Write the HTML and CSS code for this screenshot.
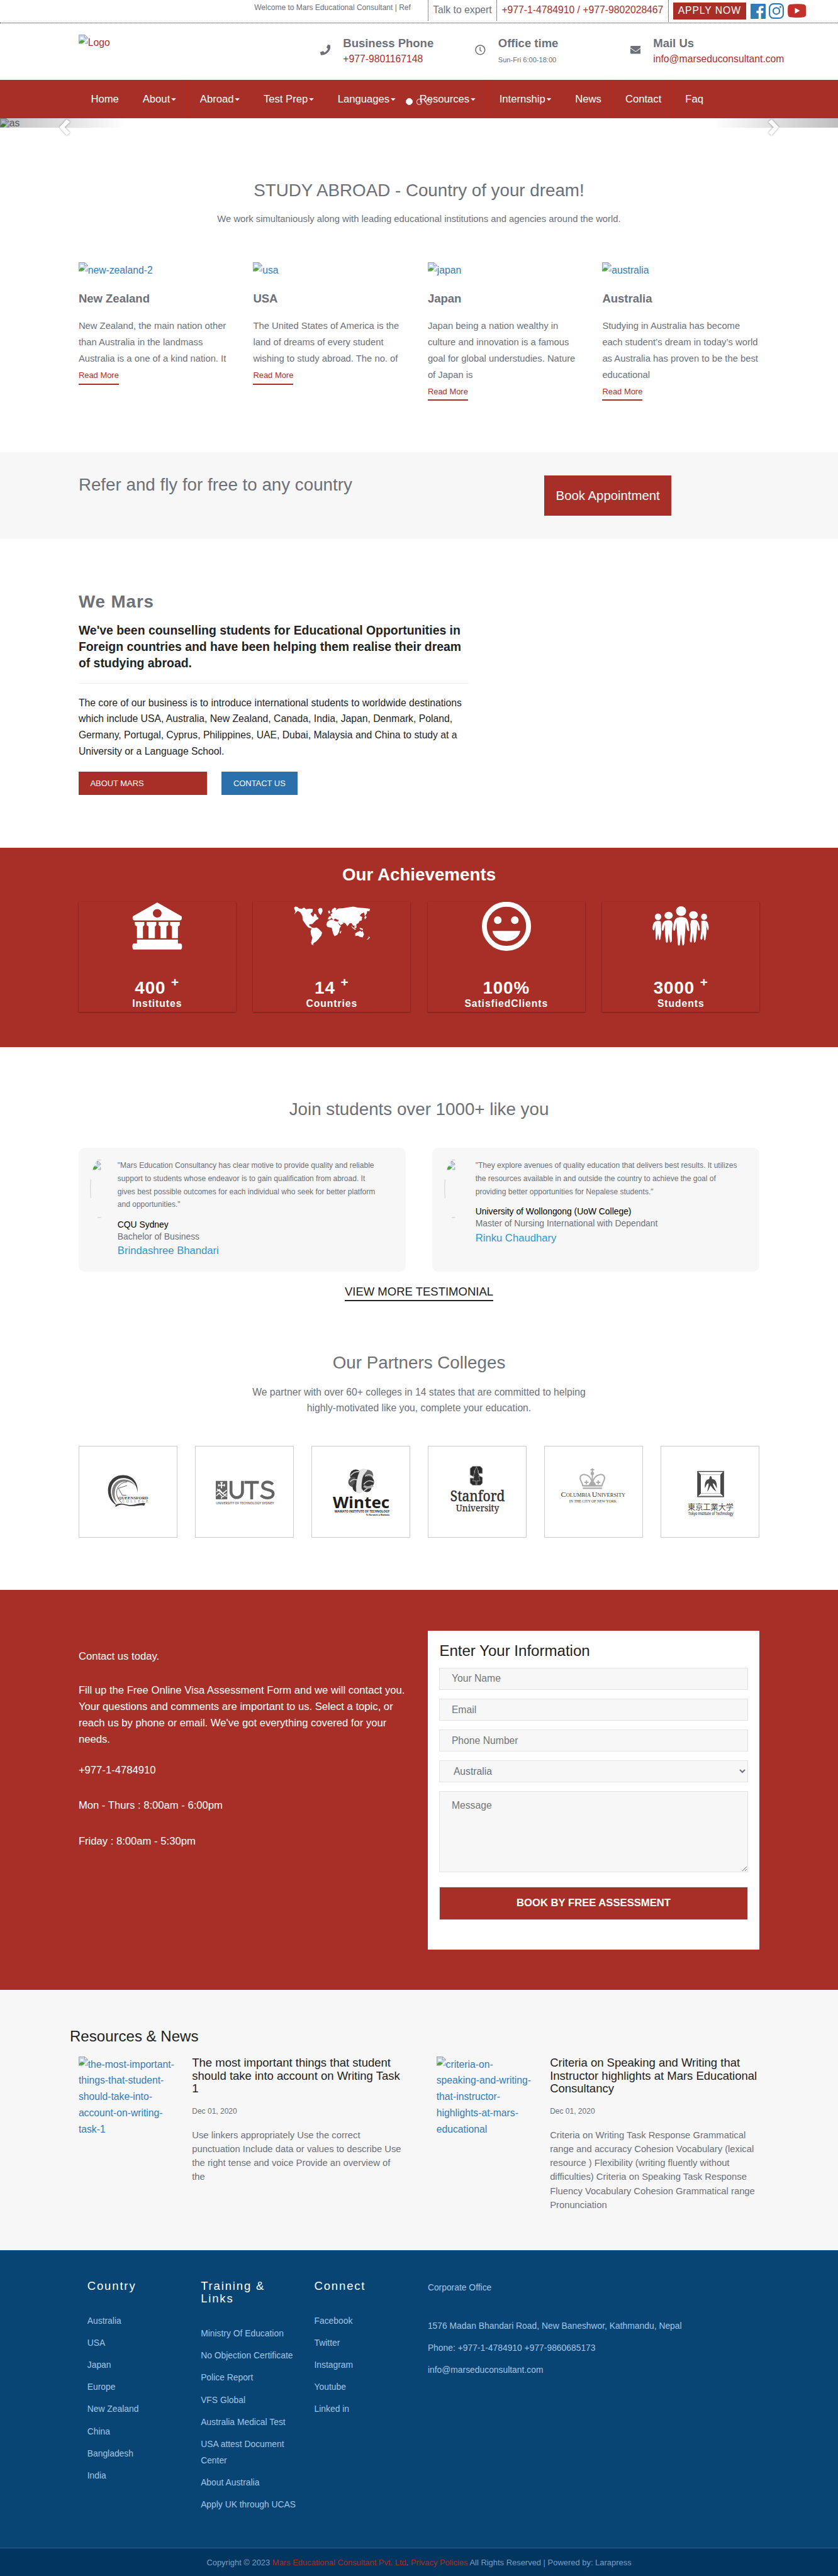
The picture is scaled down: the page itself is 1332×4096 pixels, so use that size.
FILE: index.html
```html
<!DOCTYPE html>
<html lang="en">
<head>
<meta charset="utf-8">
<title>Mars Educational Consultant</title>
<link rel="stylesheet" href="styles.css">
</head>
<body>
<svg class="defs" width="0" height="0" aria-hidden="true">
  <symbol id="missing" viewBox="0 0 16 16">
    <path d="M.5 .5H10.500L15.500 5.500V15.500H.5Z" fill="#c5d5f6"/>
    <path d="M3 6a2 2 0 0 1 3.500-1 1.500 1.500 0 0 1 1.500 2.500H3Z" fill="#fff"/>
    <path d="M1 15V13C3 9.500 6 8.500 9 10.500L12 12V15Z" fill="#4ea635"/>
    <path d="M16 6.500V10L10 16H6Z" fill="#f7f9fd"/>
    <path d="M15.500 10V15.500H11" fill="#c5d5f6"/>
    <path d="M.5 16V.5H10.500L15.500 5.500V7M15.500 11V15.500H11.500M.5 15.500H6" fill="none" stroke="#999" stroke-width="1"/>
    <path d="M10.500 .5V5.500H15.500Z" fill="#fff" stroke="#999" stroke-width="1"/>
  </symbol>
  <symbol id="avatar" viewBox="0 0 34 102">
    <clipPath id="avatar-clip"><ellipse cx="16.500" cy="51" rx="15.500" ry="50"/></clipPath>
    <g clip-path="url(#avatar-clip)"><use href="#missing" x="3" y="3" width="16" height="16"/></g>
    <path d="M13 1.500H19M13 100.500H19" stroke="#c4c4c4" stroke-width="1"/>
    <path d="M1.500 35C.6 46 .6 56 1.500 67" fill="none" stroke="#c0c0c0" stroke-width=".8"/>
  </symbol>
</svg>
<div class="page">
  <div class="topbar">
    <div class="marquee">Welcome to Mars Educational Consultant | Ref</div>
    <div class="cell expert">Talk to expert</div>
    <div class="cell"><a class="red" href="#">+977-1-4784910 / +977-9802028467</a></div>
    <div class="cell actions">
      <a class="apply" href="#">APPLY NOW</a>
      <svg class="fb" width="26" height="26" viewBox="0 0 26 26"><rect width="26" height="26" rx="1.500" fill="#337ab7"/><path d="M18 26V16h3.600l.5-4H18V9.500c0-1.300.5-2 2-2h2.300V4a30 30 0 0 0-3.300-.2c-3.300 0-5.200 2-5.200 5.200v3h-3.600v4h3.600v10Z" fill="#fff"/></svg>
      <svg class="ig" width="26" height="27" viewBox="0 0 26 27"><rect x="1.200" y="1.200" width="23.600" height="24.600" rx="7" fill="none" stroke="#337ab7" stroke-width="2.400"/><circle cx="13" cy="13.500" r="5.500" fill="none" stroke="#337ab7" stroke-width="2.400"/><circle cx="20" cy="6.800" r="1.600" fill="#337ab7"/></svg>
      <svg class="yt" width="32" height="24" viewBox="0 0 32 24"><path d="M4 1Q16-.6 28 1Q31 1.500 31.500 5Q32.400 12 31.500 19Q31 22.500 28 23Q16 24.600 4 23Q1 22.500.5 19Q-.4 12 .5 5Q1 1.500 4 1Z" fill="#c4302b"/><path d="M12.500 7V17L21 12Z" fill="#fff"/></svg>
    </div>
  </div>

  <header class="header">
    <a class="logo red" href="#"><svg class="missing"><use href="#missing"/></svg>Logo</a>
    <div class="info">
      <svg width="18" height="18" viewBox="0 0 512 512"><path fill="#6b7079" d="M493.400 24.600l-104-24c-11.300-2.600-22.900 3.300-27.500 13.900l-48 112c-4.200 9.800-1.400 21.300 6.900 28l60.600 49.600c-36 76.700-98.900 140.500-177.200 177.200l-49.600-60.600c-6.800-8.300-18.200-11.100-28-6.900l-112 48C3.900 366.500-2 378.100.6 389.400l24 104C27.100 504.200 36.700 512 48 512c256.100 0 464-207.500 464-464 0-11.200-7.700-20.900-18.600-23.400z"/></svg>
      <div><h3>Business Phone</h3><p class="red">+977-9801167148</p></div>
    </div>
    <div class="info">
      <svg width="18" height="18" viewBox="0 0 18 18" fill="none" stroke="#6b7079"><circle cx="9" cy="9" r="8" stroke-width="1.700"/><path d="M8.800 4V9.500L11.500 11.600" stroke-width="1.600"/></svg>
      <div><h3>Office time</h3><p><small>Sun-Fri 6:00-18:00</small></p></div>
    </div>
    <div class="info">
      <svg width="18" height="18" viewBox="0 0 18 18"><rect y="2.200" width="18" height="13.600" rx="1.700" fill="#6b7079"/><path d="M0 5.500L7.300 10.900Q9 12 10.700 10.900L18 5.500" fill="none" stroke="#fff" stroke-width="1.100"/></svg>
      <div><h3>Mail Us</h3><p class="red">info@marseduconsultant.com</p></div>
    </div>
  </header>

  <nav class="nav">
    <a href="#">Home</a>
    <a href="#">About<i class="caret"></i></a>
    <a href="#">Abroad<i class="caret"></i></a>
    <a href="#">Test Prep<i class="caret"></i></a>
    <a href="#">Languages<i class="caret"></i></a>
    <a href="#">Resources<i class="caret"></i></a>
    <a href="#">Internship<i class="caret"></i></a>
    <a href="#">News</a>
    <a href="#">Contact</a>
    <a href="#">Faq</a>
  </nav>

  <div class="carousel">
    <span class="slide"><svg class="missing"><use href="#missing"/></svg>as</span>
    <div class="dots"><i class="on"></i><i></i><i></i></div>
    <div class="shade left"></div>
    <div class="shade right"></div>
    <svg class="chev prev" width="22" height="32" viewBox="0 0 22 32"><path d="M14 2L19.500 6.500L10.500 15.500L19.500 25L14 29.500L1.500 15.500Z" fill="#fff"/></svg>
    <svg class="chev next" width="22" height="32" viewBox="0 0 22 32"><path d="M8 2L2.500 6.500L11.500 15.500L2.500 25L8 29.500L20.500 15.500Z" fill="#fff"/></svg>
  </div>

  <section class="abroad">
    <h2>STUDY ABROAD - Country of your dream!</h2>
    <p class="sub">We work simultaniously along with leading educational institutions and agencies around the world.</p>
    <div class="countries">
      <article><a class="alt" href="#"><svg class="missing"><use href="#missing"/></svg>new-zealand-2</a><h3>New Zealand</h3><p>New Zealand, the main nation other than Australia in the landmass Australia is a one of a kind nation. It</p><a class="more" href="#">Read More</a></article>
      <article><a class="alt" href="#"><svg class="missing"><use href="#missing"/></svg>usa</a><h3>USA</h3><p>The United States of America is the land of dreams of every student wishing to study abroad. The no. of</p><a class="more" href="#">Read More</a></article>
      <article><a class="alt" href="#"><svg class="missing"><use href="#missing"/></svg>japan</a><h3>Japan</h3><p>Japan being a nation wealthy in culture and innovation is a famous goal for global understudies. Nature of Japan is</p><a class="more" href="#">Read More</a></article>
      <article><a class="alt" href="#"><svg class="missing"><use href="#missing"/></svg>australia</a><h3>Australia</h3><p>Studying in Australia has become each student’s dream in today’s world as Australia has proven to be the best educational</p><a class="more" href="#">Read More</a></article>
    </div>
  </section>

  <section class="refer">
    <h2>Refer and fly for free to any country</h2>
    <a class="book" href="#">Book Appointment</a>
  </section>

  <section class="mars">
    <h2>We Mars</h2>
    <p class="lead">We've been counselling students for Educational Opportunities in Foreign countries and have been helping them realise their dream of studying abroad.</p>
    <hr>
    <p>The core of our business is to introduce international students to worldwide destinations which include USA, Australia, New Zealand, Canada, India, Japan, Denmark, Poland, Germany, Portugal, Cyprus, Philippines, UAE, Dubai, Malaysia and China to study at a University or a Language School.</p>
    <div class="buttons"><a class="btn-about" href="#">ABOUT MARS</a><a class="btn-contact" href="#">CONTACT US</a></div>
  </section>

  <section class="achieve">
    <h2>Our Achievements</h2>
    <div class="stats">
      <div class="stat">
        <svg width="270" height="131" fill="#fff"><g transform="translate(-35 -90) scale(.7908 .33333)">
          <path fill-rule="evenodd" d="M215 273L268 345Q270 365 264 366H166Q160 365 162 345ZM215 307A9.500 22 0 1 0 215 351A9.500 22 0 1 0 215 307Z"/>
          <path d="M166 374H187V390L184 397V457H171V397L167 390ZM192 374H213V390L210 397V457H196V397L192 390ZM218 374H239V390L235 397V457H222V397L218 390ZM243 374H264V390L260 397V457H247V397L243 390Z"/>
          <path d="M171 465H260V485H266Q269 487 269 500Q269 516 265 516H165Q161 516 161 500Q161 487 164 485H171Z"/></g></svg>
        <strong>400 <sup>+</sup></strong><span>Institutes</span>
      </div>
      <div class="stat">
        <svg width="270" height="131" fill="#fff"><g transform="translate(-335 -90) scale(.7908 .33333)">
          <path d="M513 300L516 294L520 296L524 304L530 306L535 299L539 308L547 305L554 307L553 322L549 330L551 340L555 348L557 330L561 335L563 348L566 352L566 358L561 364L557 374L553 384L546 386L546 394L549 396L552 403L557 405L562 402L568 412L574 428L572 444L566 462L561 474L556 482L554 488L556 495L551 490L550 480L553 455L550 440L549 420L551 408L544 402L540 392L536 378L532 364L531 342L527 325L521 316L517 326L513 335L516 322Z"/>
          <path d="M565 310L569 301L574 304L575 318L571 338L567 328Z"/>
          <path d="M585 374L590 364L597 362L603 370L608 372L611 388L615 396L612 406L611 424L607 440L601 447L598 434L596 416L595 404L586 400L583 388Z"/>
          <path d="M586 358L589 346L594 343L592 336L597 326L594 322L596 308L601 300L605 303L604 312L610 304L618 303L628 299L642 294L652 300L664 302L678 306L677 318L672 318L671 330L667 344L665 324L659 332L656 342L661 348L660 366L655 370L653 380L649 384L648 396L641 392L638 380L634 380L629 396L624 380L617 374L621 380L614 390L608 374L610 364L602 356L599 364L594 352L591 362Z"/>
          <path d="M587 318L590 314L592 328L588 330ZM614 420L616 420L614 434L612 430ZM637 392L640 400L648 412L645 414L639 402ZM644 396L649 396L648 406L644 404ZM655 404L662 408L663 416L657 412ZM646 432L652 424L657 419L660 426L662 419L665 438L662 453L656 451L652 444L646 446ZM675 448L678 454L674 464L671 464L675 456ZM666 350L668 342L671 348L667 362Z"/></g></svg>
        <strong>14 <sup>+</sup></strong><span>Countries</span>
      </div>
      <div class="stat">
        <svg width="270" height="131" fill="#fff"><circle cx="135.200" cy="42" r="38" fill="none" stroke="#fff" stroke-width="8.500"/><ellipse cx="120.200" cy="31.500" rx="6.500" ry="6.700"/><ellipse cx="149.500" cy="31.500" rx="6.500" ry="6.700"/><path d="M111 50H159C157 60 148 67.500 135 67.500S113 60 111 50Z"/></svg>
        <strong>100%</strong><span>SatisfiedClients</span>
      </div>
      <div class="stat">
        <svg width="270" height="131" fill="#fff"><g transform="translate(-935 -90) scale(.7908 .33333)">
          <ellipse cx="1354" cy="318" rx="11" ry="25"/><ellipse cx="1327" cy="340" rx="9" ry="19"/><ellipse cx="1381" cy="338" rx="9.500" ry="20"/><ellipse cx="1304" cy="347" rx="7" ry="17"/><ellipse cx="1404" cy="347" rx="6.500" ry="16"/>
          <path d="M1346 352Q1354 346 1363 352Q1370 360 1371 400L1372 420Q1369 424 1367 412L1364 375L1363 420L1361 485Q1360 498 1357 494L1354 436L1351 494Q1347 500 1347 485L1345 420L1344 375L1341 415Q1338 424 1337 412Q1337 360 1346 352Z"/>
          <path d="M1319 368Q1327 362 1333 368Q1337 380 1335 400L1334 425L1334 470Q1333 482 1330 478L1327 432L1325 478Q1321 486 1321 470L1319 432L1319 385L1316 415Q1313 424 1312 412Q1312 375 1319 368Z"/>
          <path d="M1376 365Q1382 360 1388 366Q1393 375 1395 412Q1394 424 1391 414L1389 385L1388 432L1386 470Q1385 484 1382 478L1380 430L1377 478Q1373 482 1373 466L1375 420L1374 385Z"/>
          <path d="M1298 371Q1304 366 1310 371L1311 430L1309 462Q1307 472 1306 462L1304 432L1302 464Q1299 472 1299 460L1298 390L1296 414Q1293 422 1292 408Q1292 378 1298 371Z"/>
          <path d="M1398 369Q1404 364 1410 371Q1414 380 1414 408Q1413 422 1411 412L1409 390L1409 430L1407 465Q1405 474 1404 464L1402 432L1400 462Q1397 470 1396 458L1398 420Z"/></g></svg>
        <strong>3000 <sup>+</sup></strong><span>Students</span>
      </div>
    </div>
  </section>

  <section class="voices">
    <h2>Join students over 1000+ like you</h2>
    <div class="quotes">
      <div class="quote">
        <svg width="34" height="102"><use href="#avatar"/></svg>
        <div><p>"Mars Education Consultancy has clear motive to provide quality and reliable<br>support to students whose endeavor is to gain qualification from abroad. It<br>gives best possible outcomes for each individual who seek for better platform<br>and opportunities."</p>
        <h4>CQU Sydney</h4><h5>Bachelor of Business</h5><h3>Brindashree Bhandari</h3></div>
      </div>
      <div class="quote wide">
        <svg width="34" height="102"><use href="#avatar"/></svg>
        <div><p>"They explore avenues of quality education that delivers best results. It utilizes<br>the resources available in and outside the country to achieve the goal of<br>providing better opportunities for Nepalese students."</p>
        <h4>University of Wollongong (UoW College)</h4><h5>Master of Nursing International with Dependant</h5><h3>Rinku Chaudhary</h3></div>
      </div>
    </div>
    <a class="viewmore" href="#">VIEW MORE TESTIMONIAL</a>

    <h2 class="partners-title">Our Partners Colleges</h2>
    <p class="partners-sub">We partner with over 60+ colleges in 14 states that are committed to helping<br>highly-motivated like you, complete your education.</p>
    <div class="partners">
      <svg viewBox="0 0 170 158">
        <path d="M101.500 80C103 62 92 50 76 50C60 50 50 62 50 77C50 88 56 98 66 103C58 95 54.500 86 55 76C56 63 65 55 77 55C91 55 100 65 101.500 80Z" fill="#3c3c3e"/>
        <path d="M98 69C94 62 86 57 77 57.500C64 58 57 68 57 79C57 87 60 94 66 98C62 91 61 85 62 78C63 67 71 61 80 61C87 61 94 64 98 69Z" fill="#818181"/>
        <path d="M83 68L68 73L75 85H82M83 62C73 62 65 70 65 80C65 88 69 94 74 98" fill="none" stroke="#555" stroke-width="1"/>
        <text x="68" y="92" textLength="52" lengthAdjust="spacingAndGlyphs" font-size="7.200" font-family="Liberation Serif,serif" font-weight="bold" fill="#3c3c3e">QUEENSFORD</text>
        <text x="75" y="97.300" textLength="45" font-size="6" font-family="Liberation Serif,serif" fill="#777">COLLEGE</text>
        <path d="M62 104C68 97 76 100 84 101.500C94 104 104 97 115 99L113 103C103 101 94 106 83 103C76 101 70 100 64 105Z" fill="#3c3c3e"/>
      </svg>
      <svg viewBox="0 0 170 158">
        <rect x="35" y="60" width="20" height="32" fill="#646464"/>
        <path d="M45 62V73M39 67.500H51M43 63H47M40 65.500V69.500M50 65.500V69.500" stroke="#fff" stroke-width="2"/>
        <path d="M36 79L41 75L47 82L54 76M36 86L41 81L47 88L54 82M37 74L44 80L54 87M45 88V91" stroke="#fff" stroke-width="1.700" fill="none"/>
        <path d="M61.500 60V79A10 10 0 0 0 81.500 79V60M85 62.500H110M97.500 62.500V92" fill="none" stroke="#646464" stroke-width="5"/>
        <path d="M134.500 66C131 62.500 128 62 125 62C119 62 116.500 65 116.500 68.500C116.500 78 135 73 135 82C135 87 131 89.800 125.500 89.800C121 89.800 117 88.500 113.500 85" fill="none" stroke="#646464" stroke-width="4.800"/>
        <text x="35.400" y="100.700" textLength="101" lengthAdjust="spacingAndGlyphs" font-size="6.200" font-family="Open Sans,sans-serif" font-weight="600" fill="#555">UNIVERSITY OF TECHNOLOGY SYDNEY</text>
      </svg>
      <svg viewBox="0 0 170 158">
        <g fill="#333"><circle cx="76" cy="50" r="10"/><circle cx="97" cy="50" r="9.500" fill="#6a6a6a"/><circle cx="72" cy="62" r="9" fill="#555"/><circle cx="98" cy="62" r="10"/><circle cx="79" cy="71" r="8.500"/><circle cx="95" cy="71" r="8.500"/><circle cx="86" cy="60" r="12"/></g>
        <path d="M67 51Q74 42 83 44M66 62Q72 54 82 60M90 66Q98 56 107 62M92 52Q100 46 106 53M90 78Q98 70 103 72" stroke="#ccc" stroke-width="1.800" fill="none"/>
        <path d="M90 69Q98 74 106 68" stroke="#aaa" stroke-width="4" fill="none"/>
        <path d="M84 41Q92 37 96 42Q88 50 87 58Q85 70 87 79Q82 83 77 79Q75 60 84 41Z" fill="#e6e6e6" stroke="#c8c8c8" stroke-width=".5"/>
        <text x="36" y="107" textLength="99" lengthAdjust="spacingAndGlyphs" font-size="27.500" font-family="Open Sans,sans-serif" font-weight="bold" fill="#1e1e1e">Wintec</text>
        <text x="39" y="115.500" textLength="96" lengthAdjust="spacingAndGlyphs" font-size="6" font-family="Open Sans,sans-serif" font-weight="bold" fill="#222">WAIKATO INSTITUTE OF TECHNOLOGY</text>
        <text x="94" y="120.500" textLength="41" lengthAdjust="spacingAndGlyphs" font-size="4.600" font-family="Open Sans,sans-serif" font-weight="bold" fill="#222">Te Kuratini o Waikato</text>
      </svg>
      <svg viewBox="0 0 170 158">
        <path d="M77 34.500H90L94 38.500V47H87V42H80V46L94 54V64L90 67.500H77L72.500 63.500V55H80V60H87V57L72.500 49.500V38.500Z" fill="#2b2b2b" stroke="#999" stroke-width="1"/>
        <path d="M83.500 35L87 44L86 44L89 52L87.500 52L90 60H84.500V66H82.500V60H77L79.500 52H78L81 44H80Z" fill="#333" stroke="#bbb" stroke-width=".7"/>
        <text x="38" y="95" textLength="95" lengthAdjust="spacingAndGlyphs" font-size="26" font-family="Noto Serif,Liberation Serif,serif" stroke="#2e2e2e" stroke-width=".5" fill="#2e2e2e">Stanford</text>
        <text x="48" y="112.700" textLength="75" lengthAdjust="spacingAndGlyphs" font-size="16.500" font-family="Noto Serif,Liberation Serif,serif" stroke="#2e2e2e" stroke-width=".3" fill="#2e2e2e">University</text>
      </svg>
      <svg viewBox="0 0 170 158">
        <path d="M82.700 38V47M79.500 40.500H86M82.700 46V66" stroke="#aaa" stroke-width="2.200"/><circle cx="82.700" cy="47" r="3" fill="#aaa"/>
        <path d="M66 69C66 64 61.500 60 61.500 55C61.500 50 66 48.500 70 49C76 50 81 55 82.700 64C84.500 55 90 50 96 49C100 48.500 104 50 104 55C104 60 99.500 64 99.500 69" fill="none" stroke="#aaa" stroke-width="2.200"/>
        <path d="M72.500 59V66M69 62.500H76M93 59V66M89.500 62.500H96.500" stroke="#aaa" stroke-width="2"/>
        <path d="M76 68Q82.700 52 89.500 68Z" fill="#aaa"/><path d="M66 68.500H99.500M66 72.700H99.500" stroke="#aaa" stroke-width="2.600"/>
        <text x="28" y="87.700" textLength="112.500" lengthAdjust="spacingAndGlyphs" font-family="Liberation Serif,serif" font-size="8.800" fill="#333"><tspan font-size="12.500">C</tspan>OLUMBIA <tspan font-size="12.500">U</tspan>NIVERSITY</text>
        <text x="42.500" y="97.700" textLength="82.500" lengthAdjust="spacingAndGlyphs" font-family="Liberation Serif,serif" font-size="6.500" fill="#333">IN THE CITY OF NEW YORK</text>
      </svg>
      <svg viewBox="0 0 170 158">
        <rect x="63.700" y="43.500" width="44.600" height="44" fill="#fff" stroke="#484848" stroke-width="1.600"/>
        <path d="M63 43L69 49V82L63 88ZM109 43L103 49V82L109 88Z" fill="#484848"/><path d="M69 49H103M69 82H103M68 86H104" stroke="#888" stroke-width=".7"/>
        <path d="M86 51.500C88 52 88 55 88.500 57C93 57 97 59 97 73C94 68 93 64 90 64C90 69 94 74 96 78.500C91 76 88 71 86 68C84 71 83 76 80 78.500C81 73 83 69 82.500 64C79 64 78 69 76 73C75 61 79 57 83.500 57C84 55 84 52 86 51.500Z" fill="#484848"/>
        <text x="46" y="111" textLength="80" lengthAdjust="spacingAndGlyphs" font-size="13.500" font-family="Noto Sans CJK JP,sans-serif" fill="#444">東京工業大学</text>
        <text x="47" y="119" textLength="78.500" lengthAdjust="spacingAndGlyphs" font-size="7" font-family="Open Sans,sans-serif" fill="#333" stroke="#333" stroke-width=".15">Tokyo Institute of Technology</text>
      </svg>
    </div>
  </section>

  <section class="contact">
    <div class="contact-text">
      <p>Contact us today.</p>
      <p class="fill">Fill up the Free Online Visa Assessment Form and we will contact you. Your questions and comments are important to us. Select a topic, or reach us by phone or email. We've got everything covered for your needs.</p>
      <p class="tel">+977-1-4784910</p>
      <p class="hours">Mon - Thurs : 8:00am - 6:00pm</p>
      <p class="hours">Friday : 8:00am - 5:30pm</p>
    </div>
    <form class="form">
      <h3>Enter Your Information</h3>
      <input type="text" placeholder="Your Name">
      <input type="text" placeholder="Email">
      <input type="text" placeholder="Phone Number">
      <select><option>Australia</option></select>
      <textarea placeholder="Message"></textarea>
      <button type="button">BOOK BY FREE ASSESSMENT</button>
    </form>
  </section>

  <section class="news">
    <h3>Resources &amp; News</h3>
    <div class="posts">
      <article>
        <a class="alt" href="#"><svg class="missing"><use href="#missing"/></svg>the-most-important-<br>things-that-student-<br>should-take-into-<br>account-on-writing-<br>task-1</a>
        <div><h4>The most important things that student<br>should take into account on Writing Task<br>1</h4><time>Dec 01, 2020</time><p>Use linkers appropriately Use the correct punctuation Include data or values to describe Use the right tense and voice Provide an overview of the</p></div>
      </article>
      <article>
        <a class="alt" href="#"><svg class="missing"><use href="#missing"/></svg>criteria-on-<br>speaking-and-writing-<br>that-instructor-<br>highlights-at-mars-<br>educational</a>
        <div><h4>Criteria on Speaking and Writing that<br>Instructor highlights at Mars Educational<br>Consultancy</h4><time>Dec 01, 2020</time><p>Criteria on Writing Task Response Grammatical range and accuracy Cohesion Vocabulary (lexical resource ) Flexibility (writing fluently without difficulties) Criteria on Speaking Task Response Fluency Vocabulary Cohesion Grammatical range Pronunciation</p></div>
      </article>
    </div>
  </section>

  <footer class="footer">
    <div class="cols">
      <div><h3>Country</h3><ul><li>Australia</li><li>USA</li><li>Japan</li><li>Europe</li><li>New Zealand</li><li>China</li><li>Bangladesh</li><li>India</li></ul></div>
      <div><h3>Training &amp;<br>Links</h3><ul><li>Ministry Of Education</li><li>No Objection Certificate</li><li>Police Report</li><li>VFS Global</li><li>Australia Medical Test</li><li>USA attest Document<br>Center</li><li>About Australia</li><li>Apply UK through UCAS</li></ul></div>
      <div><h3>Connect</h3><ul><li>Facebook</li><li>Twitter</li><li>Instagram</li><li>Youtube</li><li>Linked in</li></ul></div>
      <div class="office"><p class="corp">Corporate Office</p><p>1576 Madan Bhandari Road, New Baneshwor, Kathmandu, Nepal</p><p>Phone: +977-1-4784910 +977-9860685173</p><p>info@marseduconsultant.com</p></div>
    </div>
    <div class="copy">Copyright © 2023 <a class="red" href="#">Mars Educational Consultant Pvt. Ltd</a>. <a class="red" href="#">Privacy Policies</a> All Rights Reserved | Powered by: Larapress</div>
  </footer>
</div>
</body>
</html>
```
FILE: styles.css
```css
* { box-sizing: border-box; }
html { background: #033561; }
body { margin: 0; overflow-x: hidden; }
.defs { position: absolute; }
.page {
  zoom: .925;
  width: 1440px;
  background: #fff;
  color: #6b7079;
  font: 17px/28px "Liberation Sans", Arial, sans-serif;
}
h2, h3, h4, h5, p, ul, hr { margin: 0; padding: 0; }
h2 { font-size: 30px; line-height: 33px; font-weight: 400; }
ul { list-style: none; }
a { color: inherit; text-decoration: none; }
svg { flex: none; }
.red, a.red { color: #a82f28; }
.missing { width: 16px; height: 16px; vertical-align: 3px; }
.alt { color: #337ab7; display: block; }

/* top bar */
.topbar { display: flex; height: 40px; border-bottom: 1px dotted #333; }
.marquee { width: 269px; margin-left: 437px; overflow: hidden; white-space: nowrap; font-size: 13px; line-height: 28px; }
.cell { height: 36px; padding: 0 8px; border-left: 1px dotted #333; line-height: 35px; white-space: nowrap; }
.expert { margin-left: 29px; width: 118px; }
.cell + .cell { width: 295px; }
.cell.actions { display: flex; align-items: flex-start; height: 38px; width: 260px; }
.apply { height: 30px; margin-top: 4px; padding: 0 8px; background: #a82f28; color: #fff; letter-spacing: 1px; line-height: 29px; width: 125px; }
.fb { margin: 6px 0 0 8px; }
.ig { margin: 5.500px 0 0 5px; }
.yt { margin: 7px 0 0 6px; }

/* header */
.header { display: flex; height: 97px; padding: 19px 0 0 135px; }
.logo { width: 415px; }
.info { display: flex; width: 266.500px; padding-top: 4px; }
.info > svg { margin: 14px 21.500px 0 0; }
.info h3 { font-size: 20px; line-height: 23px; margin-bottom: 2px; }
.info small { font-size: 12px; }

/* navigation */
.nav { display: flex; height: 66px; padding-left: 135px; background: #a82f28; color: #fff; font-size: 18px; line-height: 66px; }
.nav a { padding: 0 20px; border-left: 1px dotted #c4260f; white-space: nowrap; }
.caret { display: inline-block; width: 8.300px; height: 4.300px; margin-left: 2px; vertical-align: middle; background: #fff; clip-path: polygon(0 0, 100% 0, 50% 100%); }

/* carousel */
.carousel { position: relative; height: 17px; }
.slide { display: block; height: 17px; line-height: 17px; }
.slide .missing { vertical-align: -2px; }
.dots { position: absolute; left: 697px; top: -34px; display: flex; align-items: center; gap: 6.500px; height: 12px; }
.dots i { width: 10px; height: 10px; border: 1px solid #fff; border-radius: 50%; }
.dots .on { width: 12px; height: 12px; background: #fff; }
.shade { position: absolute; top: 0; width: 216px; height: 17px; }
.shade.left { left: 0; background: linear-gradient(90deg, rgba(0,0,0,.25), rgba(0,0,0,0)); }
.shade.right { right: 0; background: linear-gradient(270deg, rgba(0,0,0,.25), rgba(0,0,0,0)); }
.chev { position: absolute; top: 0; filter: drop-shadow(0 1px 1.500px rgba(0,0,0,.45)); }
.prev { left: 100px; }
.next { left: 1318px; }

/* study abroad */
.abroad { height: 557px; padding-top: 91px; text-align: center; }
.sub { margin-top: 19.500px; font-size: 16px; }
.countries { display: grid; grid-template-columns: repeat(4, 270px); gap: 30px; padding: 59px 0 0 135px; text-align: left; }
.countries h3 { margin: 24px 0 22.500px; font-size: 20px; line-height: 22px; }
.countries p { font-size: 16px; }
.more { display: inline-block; border-bottom: 2.200px solid #a82f28; color: #a82f28; font-size: 14px; vertical-align: top; }

/* referral band */
.refer { display: flex; height: 150px; padding: 40px 0 0 135px; background: #f7f7f7; }
.refer h2 { width: 800px; }
.book { width: 219px; height: 70px; background: #a82f28; color: #fff; font-size: 22px; line-height: 70px; text-align: center; }

/* about */
.mars { height: 530px; padding: 91px 635px 0 135px; color: #222; }
.mars h2 { color: #6b7079; font-weight: 700; letter-spacing: 1px; }
.lead { margin-top: 19.500px; font-size: 21px; font-weight: 700; }
.mars hr { margin: 19.500px 0 19px; border: 0; border-top: 1px solid #eee; }
.buttons { display: flex; gap: 25px; margin-top: 20.500px; color: #fff; font-size: 14px; line-height: 40px; }
.buttons a { padding: 0 20px; white-space: nowrap; }
.btn-about { width: 221px; background: #a82f28; }
.btn-contact { width: 130px; background: #2970ad; }

/* achievements */
.achieve { height: 343px; padding-top: 31px; background: #a82f28; color: #fff; text-align: center; }
.achieve h2 { font-weight: 700; }
.stats { display: grid; grid-template-columns: repeat(4, 270px); gap: 30px; padding: 29px 0 0 135px; }
.stat { height: 190px; box-shadow: 0 1px 3px rgba(0,0,0,.24), 0 1px 2px rgba(0,0,0,.24); font-weight: 700; letter-spacing: 1px; }
.stat svg, .stat strong, .stat span { display: block; }
.stat strong { font-size: 30px; line-height: 34px; }
.stat sup { font-size: 22.500px; line-height: 0; position: relative; top: -.5em; vertical-align: baseline; }
.stat span { line-height: 22px; }

/* testimonials and partners */
.voices { height: 933px; padding-top: 91px; text-align: center; }
.quotes { display: grid; grid-template-columns: 562px 562px; gap: 46px; padding: 49px 0 20.500px 135px; text-align: left; }
.quote { display: flex; height: 213px; padding: 19.800px 0 0 20px; border-radius: 10px; background: #f7f7f7; white-space: nowrap; }
.quote > svg { margin-right: 13px; }
.quote.wide > svg { margin-right: 20px; }
.quote p { font-size: 13px; line-height: 22.300px; margin-bottom: 13px; }
.quote h4, .quote h5 { font-size: 15px; line-height: 20.300px; font-weight: 400; }
.quote h4 { color: #000; }
.quote h3 { margin-top: 2px; font-size: 18px; line-height: 26px; font-weight: 400; color: #2c97d3; }
.viewmore { display: block; width: 256px; margin: 0 auto; border-bottom: 2.200px solid #222; color: #222; font-size: 20px; white-space: nowrap; }
.partners-title { margin-top: 90px; }
.partners-sub { margin-top: 19.400px; }
.partners { display: grid; grid-template-columns: repeat(6, 170px); gap: 30px; padding: 50px 0 0 135px; }
.partners svg { width: 170px; height: 158px; border: 1px solid #ccc; }

/* contact */
.contact { display: flex; gap: 30px; height: 688px; padding: 70px 135px 0; background: #a82f28; }
.contact-text { width: 570px; padding-top: 31px; color: #fff; font-size: 18px; }
.fill { margin-top: 30px; }
.tel { margin-top: 25px; }
.hours { margin-top: 33px; }
.form { display: flex; flex-direction: column; width: 570px; height: 548px; padding: 20.500px 20px 20px; background: #fff; }
.form h3 { margin-bottom: 14.500px; color: #222; font-size: 26px; line-height: 29px; font-weight: 400; }
.form input, .form select, .form textarea {
  width: 530px; height: 38px; flex: none; margin: 0 0 15px; padding: 0 20px; border: 1px solid #e1e3e4; border-radius: 0;
  background: #f7f7f7; color: #6b7079; font: 17px "Liberation Sans", Arial, sans-serif;
}
.form select { padding-right: 0; }
.form textarea { height: 140px; margin-bottom: 24px; padding: 14px 20px; resize: vertical; }
.form ::placeholder { color: #757575; }
.form button { width: 530px; height: 58px; border: 1px solid #e1e3e4; background: #a82f28; color: #fff; font: 700 18px "Liberation Sans", Arial, sans-serif; }

/* resources */
.news { height: 447px; padding: 65.500px 0 0 120px; background: #f7f7f7; }
.news h3 { color: #222; font-size: 26px; line-height: 29px; font-weight: 400; }
.posts { display: flex; gap: 30px; padding: 19.200px 0 0 15px; }
.posts article { display: flex; width: 585px; }
.posts .alt { width: 195px; white-space: nowrap; }
.posts div { width: 365px; }
.posts h4 { color: #222; font-size: 20px; line-height: 22px; font-weight: 400; padding-top: .8px; white-space: nowrap; }
.posts time { display: block; margin: 17.400px 0; font-size: 13px; line-height: 22px; }
.posts p { font-size: 16px; line-height: 24px; }

/* footer */
.footer { height: 560px; background: #084575; color: #a3c5e6; font-size: 15px; }
.cols { display: flex; height: 511px; padding: 51px 0 0 150px; }
.cols > div { width: 195px; }
.cols h3 { margin-bottom: 35px; color: #fff; font-size: 20px; line-height: 22px; font-weight: 400; letter-spacing: 2px; }
.cols li { margin-bottom: 10px; white-space: nowrap; }
.cols .office { width: 600px; }
.office p { margin-bottom: 10px; }
.office .corp { margin-bottom: 37.500px; }
.copy { height: 49px; border-top: 1px solid #2f6090; background: #033561; color: #769fc6; font-size: 14px; line-height: 49px; text-align: center; }
```
